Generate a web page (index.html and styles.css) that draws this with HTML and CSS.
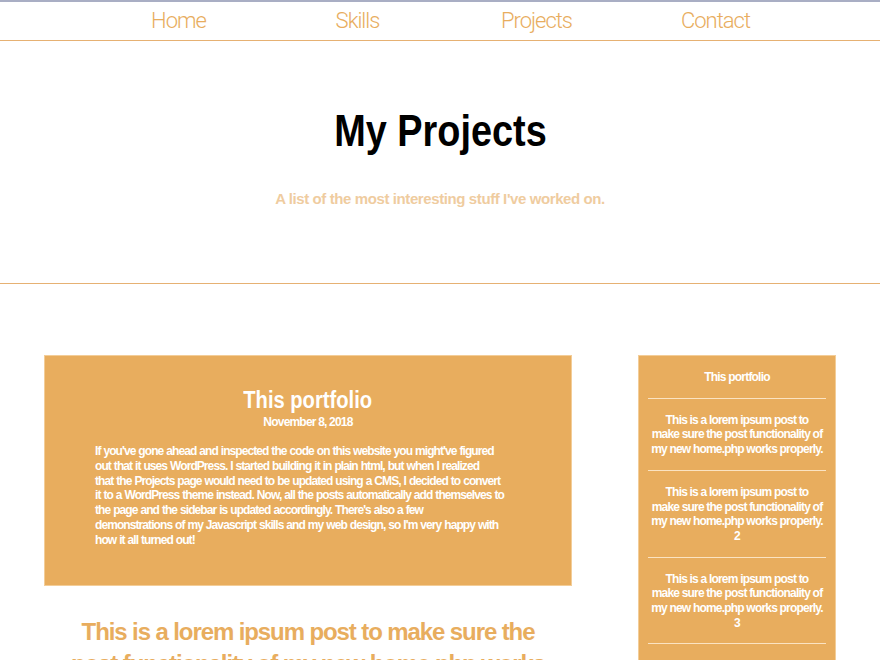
FILE: index.html
```html
<!DOCTYPE html>
<html>
<head>
<meta charset="utf-8">
<link rel="stylesheet" href="styles.css">
</head>
<body>
<nav class="nav">
  <a href="#">Home</a>
  <a href="#">Skills</a>
  <a href="#">Projects</a>
  <a href="#">Contact</a>
</nav>
<header class="hero">
  <h1><span>My Projects</span></h1>
  <p class="sub">A list of the most interesting stuff I've worked on.</p>
</header>
<main class="content">
  <section class="posts">
    <article class="card">
      <h2><span>This portfolio</span></h2>
      <div class="date">November 8, 2018</div>
      <p>If you've gone ahead and inspected the code on this website you might've figured out that it uses WordPress. I started building it in plain html, but when I realized that&nbsp;the Projects page would need to be updated using a CMS, I decided to convert it to a WordPress theme instead. Now, all the posts automatically add themselves to the page and the sidebar is updated accordingly. There's also a few<br>demonstrations of my Javascript skills and my web design, so I'm very happy with how it all turned out!</p>
    </article>
    <article class="plain">
      <h2>This is a lorem ipsum post to make sure the post functionality of my new home.php works properly.</h2>
    </article>
  </section>
  <aside class="sidebar">
    <div class="side-item">This portfolio</div>
    <div class="side-item">This is a lorem ipsum post to make&nbsp;sure the post functionality of my new home.php works properly.</div>
    <div class="side-item">This is a lorem ipsum post to make&nbsp;sure the post functionality of my new home.php works properly. 2</div>
    <div class="side-item">This is a lorem ipsum post to make&nbsp;sure the post functionality of my new home.php works properly. 3</div>
  </aside>
</main>
</body>
</html>
```

FILE: styles.css
```css
* { box-sizing: border-box; }
html, body { margin: 0; padding: 0; }
body {
  background: #fff;
  font-family: "Liberation Sans", Arial, sans-serif;
  border-top: 2px solid #a9aec4;
}
.nav {
  display: grid;
  grid-template-columns: repeat(4, 179px);
  padding-left: 89px;
  height: 39px;
  align-items: center;
  border-bottom: 1px solid #e6b173;
}
.nav a {
  text-align: center;
  color: #e8ad5e;
  text-decoration: none;
  font-family: Roboto, sans-serif;
  font-size: 22px;
  font-weight: 300;
  letter-spacing: -1px;
  line-height: 36px;
}
.hero {
  height: 243px;
  border-bottom: 1px solid #e6b173;
  text-align: center;
  padding-top: 65px;
}
.hero h1 {
  margin: 0;
  font-size: 44px;
  font-weight: bold;
  line-height: 50px;
  color: #000;
}
.hero h1 span {
  display: inline-block;
  transform: scaleX(0.86);
}
.card h2 span {
  display: inline-block;
  transform: scaleX(0.84);
}
.sub {
  margin: 34px 0 0;
  font-size: 15px;
  font-weight: bold;
  color: #efcc9f;
  letter-spacing: -0.4px;
}
.content {
  display: flex;
  gap: 66px;
  padding: 71px 44px 0;
}
.posts { width: 528px; flex: none; }
.card {
  background: #e8ad5e;
  border: 1px solid #f3cd98;
  color: #fff;
  text-align: center;
  padding: 30px 0 38px 50px;
  height: 231px;
}
.card h2 {
  margin: 0 0 0 -50px;
  font-size: 24px;
  line-height: 28px;
}
.date {
  margin: 1px 0 0 -50px;
  font-size: 12px;
  font-weight: bold;
  line-height: 14px;
  letter-spacing: -0.8px;
}
.card p {
  width: 411px;
  margin: 15px 0 0;
  text-align: left;
  font-size: 12px;
  line-height: 14.8px;
  font-weight: bold;
  letter-spacing: -0.92px;
  word-spacing: 0.5px;
}
.plain { text-align: center; padding: 30px 20px 0; }
.plain h2 {
  margin: 0;
  color: #e8ad5e;
  font-size: 24px;
  line-height: 32px;
  letter-spacing: -1.1px;
}
.sidebar {
  width: 198px;
  flex: none;
  background: #e8ad5e;
  border: 1px solid #f3cd98;
  padding: 0 9px;
  color: #fff;
  font-size: 12px;
  font-weight: bold;
  letter-spacing: -0.8px;
  height: 320px;
}
.side-item {
  text-align: center;
  border-bottom: 1px solid #fbe3c2;
  line-height: 14.7px;
  padding: 14px 0 13px;
}
.side-item:first-child { padding: 14px 0 13px; }
```
